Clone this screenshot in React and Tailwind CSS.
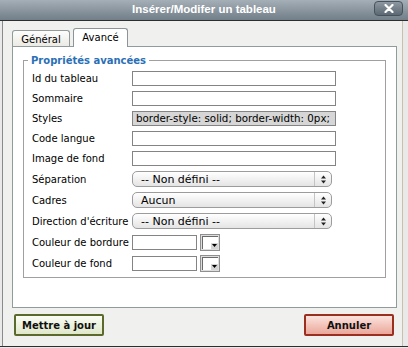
import React from "react";

const champsTexte = [
  { label: "Id du tableau", valeur: "" },
  { label: "Sommaire", valeur: "" },
  { label: "Styles", valeur: "border-style: solid; border-width: 0px;", grise: true },
  { label: "Code langue", valeur: "" },
  { label: "Image de fond", valeur: "" },
];

const listes = [
  { label: "Séparation", valeur: "-- Non défini --" },
  { label: "Cadres", valeur: "Aucun" },
  { label: "Direction d'écriture", valeur: "-- Non défini --" },
];

const couleurs = ["Couleur de bordure", "Couleur de fond"];

function Fleches() {
  return (
    <svg width="5" height="9" viewBox="0 0 5 9">
      <path d="M2.5 0.5 L5 3.5 L0 3.5 Z" fill="#222" />
      <path d="M2.5 8.5 L5 5.5 L0 5.5 Z" fill="#222" />
    </svg>
  );
}

function Selecteur({ valeur }) {
  return (
    <div className="flex h-[16px] w-[200px] items-center rounded-[5px] border border-[#9c9c9c] bg-gradient-to-b from-[#ffffff] to-[#e4e4e4]">
      <span className="flex-1 pl-[8px] text-[11px] leading-none">{valeur}</span>
      <span className="flex h-full w-[17px] items-center justify-center border-l border-[#c4c4c4]">
        <Fleches />
      </span>
    </div>
  );
}

function Pipette() {
  return (
    <div className="flex h-[17px] w-[20px] items-center justify-center border border-[#8f8f8f] bg-[#dedede]">
      <div className="relative h-[13px] w-[16px] border-l border-t border-[#6a6a6a] bg-white">
        <div className="absolute bottom-0 right-0 flex h-[6px] w-[7px] items-center justify-center bg-[#d4d4d4]">
          <svg width="5" height="3" viewBox="0 0 5 3">
            <path d="M0 0 L5 0 L2.5 3 Z" fill="#000" />
          </svg>
        </div>
      </div>
    </div>
  );
}

export default function App() {
  return (
    <div className="flex h-[348px] w-[408px] flex-col overflow-hidden bg-[#e9e9e9] font-['DejaVu_Sans',sans-serif] text-[10px] text-black">
      <div className="relative flex h-[21px] shrink-0 items-center justify-center border-b border-[#2e2e2e] bg-gradient-to-b from-[#a5afb7] to-[#727e88]">
        <span className="font-['Liberation_Sans',sans-serif] text-[11.5px] font-bold text-white">
          Insérer/Modifer un tableau
        </span>
        <div className="absolute right-[5px] top-[1px] flex h-[15px] w-[29px] items-center justify-center rounded-[4px] border border-[#46525c] bg-gradient-to-b from-[#8d98a2] to-[#5c6873]">
          <svg width="10" height="9" viewBox="0 0 10 9">
            <path d="M1.5 1 L8.5 8 M8.5 1 L1.5 8" stroke="#fff" strokeWidth="2.2" strokeLinecap="round" />
          </svg>
        </div>
      </div>

      <div className="ml-[2px] h-[325px] w-[401px] shrink-0 border-l border-r border-l-[#8a8a8a] border-r-[#c9bfae] bg-[#f0f0ee] pt-[7px]">
        <div className="ml-[9px] flex items-end gap-[3px]">
          <div className="flex h-[16px] w-[58px] items-center justify-center rounded-t-[3px] border border-b-0 border-[#919b9c] bg-gradient-to-b from-[#fdfdfc] to-[#ebeae4] pt-[1px]">
            Général
          </div>
          <div className="relative z-10 -mb-px flex h-[19px] w-[55px] items-center justify-center rounded-t-[3px] border border-b-0 border-[#8a9499] bg-white pb-[1px]">
            Avancé
          </div>
        </div>

        <div className="ml-[9px] h-[262px] w-[385px] border border-[#919b9c] bg-white px-[10px] pt-[7px]">
          <fieldset className="w-[363px] border border-[#a0a0a0] pb-[6px] pl-[4px]">
            <legend className="px-[3px] text-[10px] font-bold leading-[13px] text-[#2b6fb6]">
              Propriétés avancées
            </legend>
            <div className="flex flex-col gap-[5px] pl-[4px] pt-[4px]">
              {champsTexte.map((c) => (
                <div key={c.label} className="flex h-[15px] items-center">
                  <span className="w-[100px]">{c.label}</span>
                  <div
                    className={`flex h-[15px] w-[204px] items-center overflow-hidden whitespace-nowrap border border-[#848484] pl-[3px] text-[10.3px] ${
                      c.grise ? "bg-[#d6d6d6]" : "bg-white"
                    }`}
                  >
                    {c.valeur}
                  </div>
                </div>
              ))}
              {listes.map((l) => (
                <div key={l.label} className="flex h-[16px] items-center">
                  <span className="w-[100px] whitespace-nowrap">{l.label}</span>
                  <Selecteur valeur={l.valeur} />
                </div>
              ))}
              {couleurs.map((c) => (
                <div key={c} className="flex h-[16px] items-center">
                  <span className="w-[100px] whitespace-nowrap">{c}</span>
                  <div className="h-[15px] w-[65px] border border-[#848484] bg-white" />
                  <div className="ml-[3px]">
                    <Pipette />
                  </div>
                </div>
              ))}
            </div>
          </fieldset>
        </div>

        <div className="ml-[11px] mt-[6px] flex w-[380px] justify-between">
          <button className="flex h-[22px] w-[90px] items-center justify-center rounded-[2px] border-2 border-[#5b6a2c] bg-gradient-to-b from-[#fbfdf4] to-[#dfe7c9] text-[10px] font-bold text-[#111]">
            Mettre à jour
          </button>
          <button className="flex h-[22px] w-[90px] items-center justify-center rounded-[2px] border-2 border-[#9a2f20] bg-gradient-to-b from-[#fbe3dd] to-[#eaa79a] text-[10px] font-bold text-[#111]">
            Annuler
          </button>
        </div>
      </div>
      <div className="h-[1px] shrink-0 bg-[#2e2e2e]" />
    </div>
  );
}
